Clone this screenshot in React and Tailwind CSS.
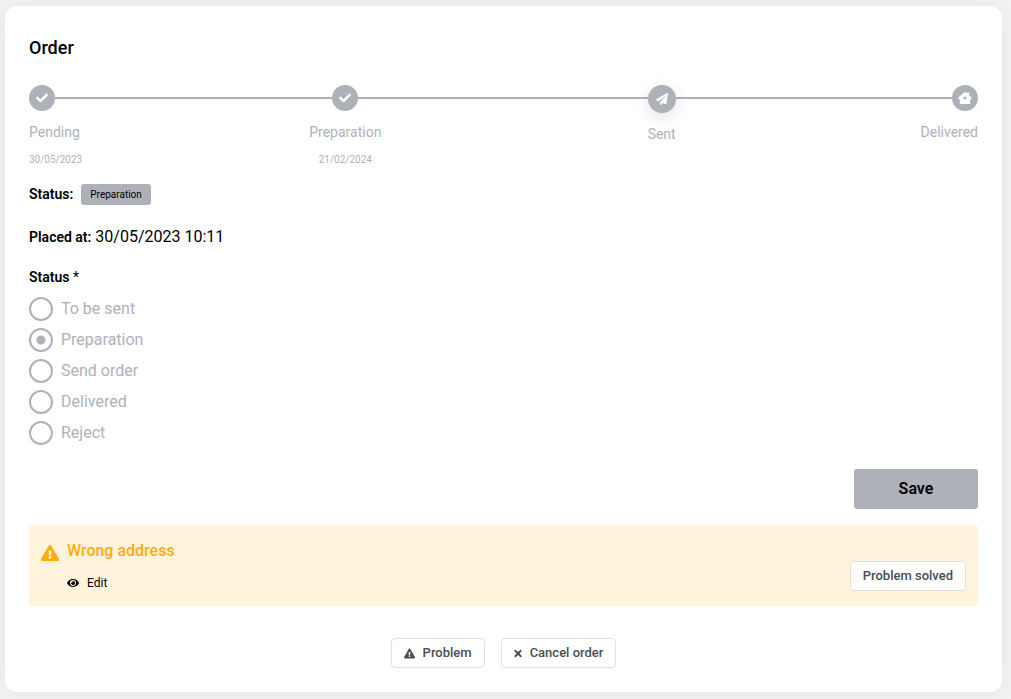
import React, { useState } from 'react';
import { FaCheck, FaExclamationTriangle, FaEye, FaPaperPlane, FaTimes } from 'react-icons/fa';

const HouseIcon = () => (
  <svg viewBox="0 0 14 14" className="h-3.5 w-3.5" fill="currentColor" aria-hidden="true">
    <path
      fillRule="evenodd"
      d="M6.6 1 8.6 2.6V1.4h2.6v3.2L13.6 6.6V8H12.2v5H1.8V8H.4V6.6L6.6 1ZM7 5.4a1.6 1.6 0 1 0 0 3.2 1.6 1.6 0 0 0 0-3.2Z"
    />
  </svg>
);

const steps = [
  { label: 'Pending', date: '30/05/2023', icon: <FaCheck size={12} /> },
  { label: 'Preparation', date: '21/02/2024', icon: <FaCheck size={12} /> },
  { label: 'Sent', icon: <FaPaperPlane size={12} />, current: true },
  { label: 'Delivered', icon: <HouseIcon /> },
];

const statuses = ['To be sent', 'Preparation', 'Send order', 'Delivered', 'Reject'];

const StepLine = () => <span className="mt-3 h-0.5 flex-1 bg-[#afb1b9]" />;

const Step = ({ step, isFirst, isLast }) => {
  const inner = !isFirst && !isLast;
  return (
    <li className={`flex flex-col ${inner ? 'col-span-2 items-center' : isFirst ? 'items-start' : 'items-end'}`}>
      <div className="flex w-full items-start">
        {!isFirst && <StepLine />}
        <span
          className={`flex items-center justify-center rounded-full bg-[#afb1b9] text-white ${
            step.current ? 'h-7 w-7 shadow-[0_4px_16px_rgba(0,0,0,0.12)]' : 'h-[26px] w-[26px]'
          }`}
        >
          {step.icon}
        </span>
        {!isLast && <StepLine />}
      </div>
      <span className="mt-[11px] text-sm leading-5">{step.label}</span>
      {step.date && <span className="mt-2 text-[10px] leading-5">{step.date}</span>}
    </li>
  );
};

const OutlineButton = ({ children }) => (
  <button
    type="button"
    className="flex h-[30px] items-center gap-2 rounded border border-[#dfdfe2] bg-white px-3 text-[13px] font-medium text-[#4c4c54] hover:bg-gray-50"
  >
    {children}
  </button>
);

const App = () => {
  const [status, setStatus] = useState('Preparation');

  return (
    <div className="min-h-screen bg-[#f2f2f2] pt-1.5 pr-[9px] pb-[7px] pl-[5px] font-[Roboto,sans-serif] text-black">
      <main className="rounded-xl bg-white px-6 pt-7 pb-6 shadow-[0_0_20px_rgba(0,0,0,0.06)]">
        <h1 className="text-lg leading-7 font-medium">Order</h1>

        <ol className="mt-[23px] grid grid-cols-6 text-[#afb1b9]">
          {steps.map((step, index) => (
            <Step key={step.label} step={step} isFirst={index === 0} isLast={index === steps.length - 1} />
          ))}
        </ol>

        <div className="mt-3 flex items-center gap-2">
          <span className="text-sm leading-6 font-semibold">Status:</span>
          <span className="rounded-[3px] bg-[#afb1b9] px-[9px] text-[10px] leading-[21px]">Preparation</span>
        </div>
        <p className="mt-[19px] leading-6">
          <span className="text-sm font-semibold">Placed at:</span> 30/05/2023 10:11
        </p>

        <form onSubmit={(e) => e.preventDefault()}>
          <fieldset className="mt-[18px]">
            <legend className="text-sm leading-5">
              <span className="font-semibold">Status</span> *
            </legend>
            <div className="mt-2.5 flex flex-col gap-[7px]">
              {statuses.map((item) => (
                <label key={item} className="flex items-center gap-2 self-start leading-6 text-[#afb1b9]">
                  <input
                    type="radio"
                    name="status"
                    value={item}
                    checked={status === item}
                    onChange={() => setStatus(item)}
                    className="h-6 w-6 appearance-none rounded-full border-2 border-[#afb1b9] bg-white checked:bg-[radial-gradient(circle,#afb1b9_4px,#fff_5px)]"
                  />
                  {item}
                </label>
              ))}
            </div>
          </fieldset>
          <div className="mt-6 flex justify-end">
            <button type="submit" className="h-10 w-[124px] rounded-[3px] bg-[#afb1b9] font-semibold">
              Save
            </button>
          </div>
        </form>

        <section className="mt-4 flex items-end justify-between rounded bg-[#fff3dc] px-3 pt-3.5 pb-[15px]">
          <div className="flex gap-2">
            <FaExclamationTriangle size={18} className="mt-[5px] text-[#ffad0d]" />
            <div>
              <h2 className="leading-6 font-medium text-[#ffad0d]">Wrong address</h2>
              <a href="#edit" className="mt-3 flex items-center gap-2 text-xs leading-4">
                <FaEye size={12} />
                Edit
              </a>
            </div>
          </div>
          <OutlineButton>Problem solved</OutlineButton>
        </section>

        <div className="mt-8 flex justify-center gap-4">
          <OutlineButton>
            <FaExclamationTriangle size={11} />
            Problem
          </OutlineButton>
          <OutlineButton>
            <FaTimes className="h-[11px] w-2" />
            Cancel order
          </OutlineButton>
        </div>
      </main>
    </div>
  );
};

export default App;
